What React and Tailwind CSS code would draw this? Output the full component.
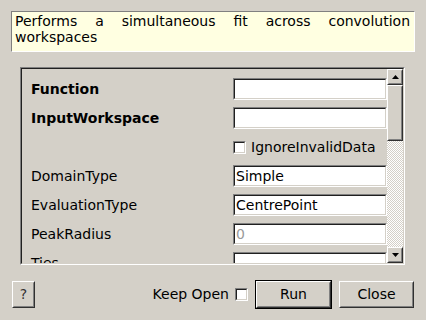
import React from 'react'

const Field = ({ value, muted }) => (
  <div className="w-[160px] h-[22px] border border-t-[#808080] border-l-[#808080] border-b-white border-r-white">
    <div className="h-full border border-t-[#202020] border-l-[#202020] border-b-[#d4d0c8] border-r-[#d4d0c8] bg-white flex items-center pl-[1px]">
      <span className={muted ? 'text-[#9a9a9a]' : 'text-black'}>{value}</span>
    </div>
  </div>
)

const Check = () => (
  <div className="w-[13px] h-[13px] border border-t-[#808080] border-l-[#808080] border-b-white border-r-white">
    <div className="w-full h-full bg-white border border-t-[#202020] border-l-[#202020] border-b-[#d4d0c8] border-r-[#d4d0c8]" />
  </div>
)

const Raised = ({ className = '', children }) => (
  <div className={`border border-t-white border-l-white border-b-[#303030] border-r-[#303030] ${className}`}>
    <div className="w-full h-full border border-t-[#d4d0c8] border-l-[#d4d0c8] border-b-[#808080] border-r-[#808080] flex items-center justify-center">
      {children}
    </div>
  </div>
)

const Row = ({ label, bold, children }) => (
  <div className="flex items-center h-[22px] mb-[7px] shrink-0">
    <div className={`w-[202px] shrink-0 ${bold ? 'font-bold' : ''}`}>{label}</div>
    {children}
  </div>
)

export default function App() {
  return (
    <div className="w-[426px] h-[320px] bg-[#d4d0c8] text-[14px] text-black font-['DejaVu_Sans',sans-serif] flex flex-col overflow-hidden">
      <div className="mx-[11px] mt-[11px] h-[41px] bg-[#ffffe1] border border-t-[#808080] border-l-[#808080] border-b-white border-r-white pl-[3px] pr-[4px] pt-[1px] leading-[16px] text-justify">
        Performs a simultaneous fit across convolution workspaces
      </div>

      <div className="ml-[20px] mt-[15px] w-[385px] h-[198px] border border-t-[#808080] border-l-[#808080] border-b-white border-r-white">
        <div className="w-full h-full border border-t-[#202020] border-l-[#202020] border-b-[#d4d0c8] border-r-[#d4d0c8] flex">
          <div className="flex-1 overflow-hidden flex flex-col pt-[9px] pl-[9px]">
            <Row label="Function" bold><Field value="" /></Row>
            <Row label="InputWorkspace" bold><Field value="" /></Row>
            <Row label="">
              <div className="flex items-center gap-[5px]">
                <Check />
                <span>IgnoreInvalidData</span>
              </div>
            </Row>
            <Row label="DomainType"><Field value="Simple" /></Row>
            <Row label="EvaluationType"><Field value="CentrePoint" /></Row>
            <Row label="PeakRadius"><Field value="0" muted /></Row>
            <Row label="Ties"><Field value="" /></Row>
          </div>

          <div className="w-[16px] shrink-0 flex flex-col">
            <Raised className="w-[16px] h-[16px] shrink-0">
              <svg width="7" height="4" viewBox="0 0 7 4"><path d="M3.5 0L7 4H0z" fill="#000" /></svg>
            </Raised>
            <Raised className="w-[16px] h-[56px] shrink-0" />
            <div className="flex-1 bg-[repeating-conic-gradient(#ffffff_0%_25%,#d4d0c8_0%_50%)] bg-size-[2px_2px]" />
            <Raised className="w-[16px] h-[16px] shrink-0">
              <svg width="7" height="4" viewBox="0 0 7 4"><path d="M0 0H7L3.5 4z" fill="#000" /></svg>
            </Raised>
          </div>
        </div>
      </div>

      <div className="flex items-center mt-[15px] ml-[12px] mr-[12px]">
        <Raised className="w-[23px] h-[27px]">
          <span className="text-[#333]">?</span>
        </Raised>
        <div className="flex-1" />
        <span>Keep Open</span>
        <div className="ml-[6px]"><Check /></div>
        <div className="ml-[7px] w-[77px] h-[29px] border border-black">
          <Raised className="w-full h-full">Run</Raised>
        </div>
        <Raised className="ml-[7px] w-[75px] h-[27px]">Close</Raised>
      </div>
    </div>
  )
}
